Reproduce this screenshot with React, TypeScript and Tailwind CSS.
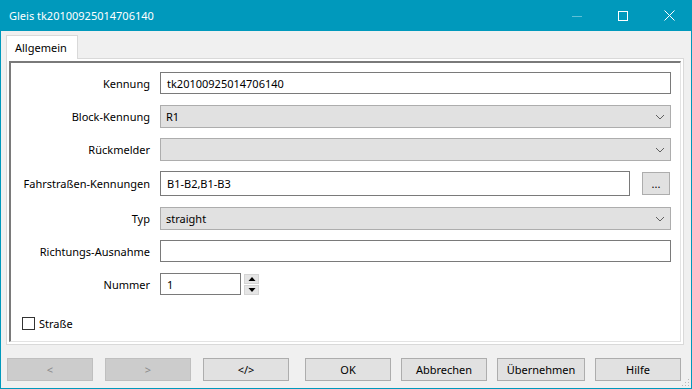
import { ReactNode } from 'react';

const font = { fontFamily: '"Noto Sans", "Segoe UI", sans-serif' };

const Chevron = () => (
  <svg width="10" height="6" viewBox="0 0 10 6" className="absolute right-[5px] top-1/2 -translate-y-1/2">
    <path d="M1 1 L5 5 L9 1" fill="none" stroke="#606060" strokeWidth="1" />
  </svg>
);

const Row = ({ label, mt, children }: { label: string; mt: string; children: ReactNode }) => (
  <div className={`flex items-center ${mt}`}>
    <div className="w-[139px] text-right pr-0 text-black">{label}</div>
    <div className="ml-[10px] flex-1 flex items-center">{children}</div>
  </div>
);

const TextBox = ({ value, h = 'h-[22px]', w = 'flex-1' }: { value?: string; h?: string; w?: string }) => (
  <div className={`${h} ${w} border border-[#7a7a7a] bg-white flex items-center px-[6px] text-black`}>{value}</div>
);

const Combo = ({ value }: { value?: string }) => (
  <div className="relative h-[23px] flex-1 border border-[#adadad] bg-[#e1e1e1] flex items-center px-[5px] text-black">
    {value}
    <Chevron />
  </div>
);

const Btn = ({ label, disabled, ml, w = 'w-[86px]' }: { label: string; disabled?: boolean; ml: string; w?: string }) => (
  <div
    className={`${ml} ${w} h-[23px] flex items-center justify-center border ${
      disabled ? 'bg-[#cccccc] border-[#bfbfbf] text-[#8a8a8a]' : 'bg-[#e1e1e1] border-[#adadad] text-black'
    }`}
  >
    {label}
  </div>
);

export default function App() {
  return (
    <div style={font} className="w-[692px] h-[389px] flex flex-col bg-[#0099bc] text-[11px] leading-none select-none">
      {/* title bar */}
      <div className="h-[31px] flex items-center text-white shrink-0">
        <span className="ml-[9px] text-[11px]">Gleis tk20100925014706140</span>
        <div className="ml-auto flex h-full">
          <div className="w-[46px] h-full flex items-center justify-center">
            <svg width="10" height="10" viewBox="0 0 10 10">
              <path d="M0 5.5 H10" stroke="#5fc0d6" strokeWidth="1" />
            </svg>
          </div>
          <div className="w-[46px] h-full flex items-center justify-center">
            <svg width="10" height="10" viewBox="0 0 10 10">
              <rect x="0.5" y="0.5" width="9" height="9" fill="none" stroke="white" strokeWidth="1" />
            </svg>
          </div>
          <div className="w-[46px] h-full flex items-center justify-center">
            <svg width="11" height="11" viewBox="0 0 11 11">
              <path d="M0.5 0.5 L10.5 10.5 M10.5 0.5 L0.5 10.5" stroke="white" strokeWidth="1" />
            </svg>
          </div>
        </div>
      </div>

      {/* body */}
      <div className="flex-1 mx-px mb-px bg-[#f0f0f0] flex flex-col relative">
        <div className="ml-[5px] mt-[4px] flex">
          <div className="w-[72px] h-[24px] -mb-px z-10 bg-white border border-[#d9d9d9] border-b-0 flex items-center pl-[8px] text-black">
            Allgemein
          </div>
        </div>

        <div className="ml-[5px] w-[678px] h-[287px] border border-[#d9d9d9] bg-white p-[2px]">
          <div className="h-full border-l-2 border-t-2 border-l-[#7a7a7a] border-t-[#7a7a7a] border-r border-b border-r-[#e3e3e3] border-b-[#e3e3e3] pt-[9px] pr-[9px]">
            <Row label="Kennung" mt="mt-0">
              <TextBox value="tk20100925014706140" />
            </Row>
            <Row label="Block-Kennung" mt="mt-[11px]">
              <Combo value="R1" />
            </Row>
            <Row label="Rückmelder" mt="mt-[10px]">
              <Combo />
            </Row>
            <Row label="Fahrstraßen-Kennungen" mt="mt-[10px]">
              <TextBox value="B1-B2,B1-B3" h="h-[25px]" />
              <div className="ml-[12px] mr-[1px] w-[28px] h-[23px] border border-[#adadad] bg-[#e1e1e1] flex items-center justify-center text-black">
                ...
              </div>
            </Row>
            <Row label="Typ" mt="mt-[11px]">
              <Combo value="straight" />
            </Row>
            <Row label="Richtungs-Ausnahme" mt="mt-[10px]">
              <TextBox />
            </Row>
            <Row label="Nummer" mt="mt-[11px]">
              <TextBox value="1" w="w-[81px]" />
              <div className="ml-[3px] flex flex-col gap-px">
                {['M4 1 L7.5 5 L0.5 5 Z', 'M0.5 1 L7.5 1 L4 5 Z'].map((d) => (
                  <div key={d} className="w-[15px] h-[10px] border border-[#d4d4d4] bg-[#e5e5e5] flex items-center justify-center">
                    <svg width="8" height="6" viewBox="0 0 8 6">
                      <path d={d} fill="black" />
                    </svg>
                  </div>
                ))}
              </div>
            </Row>
            <div className="mt-[22px] ml-[11px] flex items-center">
              <div className="w-[13px] h-[13px] border border-[#333333] bg-white" />
              <span className="ml-[4px] text-black">Straße</span>
            </div>
          </div>
        </div>

        <div className="mt-[13px] ml-[6px] flex">
          <Btn label="<" disabled ml="ml-0" />
          <Btn label=">" disabled ml="ml-[12px]" />
          <Btn label="</>" ml="ml-[12px]" />
          <Btn label="OK" ml="ml-[16px]" />
          <Btn label="Abbrechen" ml="ml-[10px]" />
          <Btn label="Übernehmen" ml="ml-[10px]" w="w-[88px]" />
          <Btn label="Hilfe" ml="ml-[10px]" />
        </div>

        <svg width="8" height="8" viewBox="0 0 8 8" className="absolute right-[1px] bottom-[1px]">
          <rect x="6" y="0" width="1" height="1" fill="#b8b8b8" />
          <rect x="3" y="3" width="1" height="1" fill="#b8b8b8" />
          <rect x="6" y="3" width="1" height="1" fill="#b8b8b8" />
          <rect x="0" y="6" width="1" height="1" fill="#b8b8b8" />
          <rect x="3" y="6" width="1" height="1" fill="#b8b8b8" />
          <rect x="6" y="6" width="1" height="1" fill="#b8b8b8" />
        </svg>
      </div>
    </div>
  );
}
